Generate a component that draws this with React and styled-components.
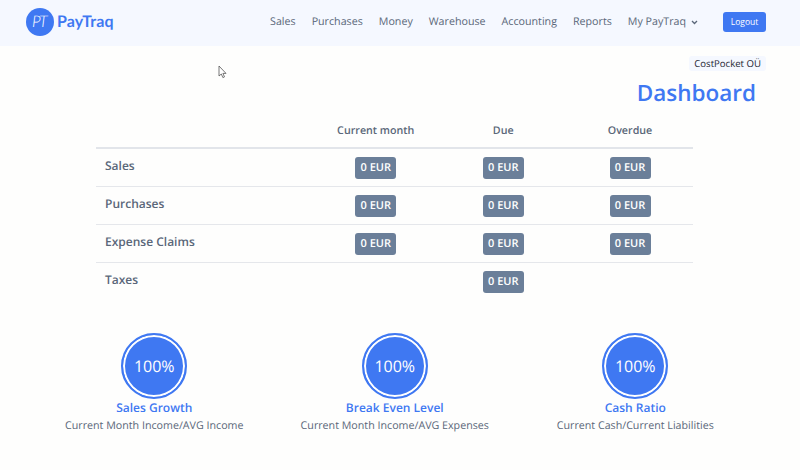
import React from "react";
import styled, { createGlobalStyle } from "styled-components";

const Global = createGlobalStyle`
  html, body { margin: 0; padding: 0; background: #fff; }
  body { font-family: "Open Sans", "Liberation Sans", sans-serif; color: #4a5568; text-rendering: geometricPrecision; }
`;
const Page = styled.div`
  position: relative;
  width: 800px;
  height: 470px;
  overflow: hidden;
  background: #fefefd;
`;
const Header = styled.header`
  height: 46px;
  box-sizing: border-box;
  background: #f5f8ff;
  display: flex;
  align-items: center;
  padding: 0 34px 2px 26px;
`;
const Brand = styled.div`
  display: flex;
  align-items: center;
  gap: 3px;
`;
const LogoMark = styled.div`
  width: 28px;
  height: 28px;
  border-radius: 50%;
  background: #3f78f2;
  color: #fff;
  display: flex;
  align-items: center;
  justify-content: center;
  font: italic 300 16px/1 "Lato", sans-serif;
  letter-spacing: -1.5px;
  padding-right: 2px;
  box-sizing: border-box;
`;
const BrandName = styled.span`
  font: 700 16px/1 "Lato", sans-serif;
  color: #3f78f2;
  letter-spacing: 0.15px;
`;
const Nav = styled.nav`
  margin-left: auto;
  display: flex;
  align-items: center;
  gap: 16px;
`;
const NavItem = styled.a`
  font-size: 10.7px;
  color: #5a6779;
  display: flex;
  align-items: center;
  gap: 5px;
`;
const Logout = styled.button`
  margin-left: 9px;
  width: 43px;
  height: 20px;
  padding: 0;
  border: 0;
  border-radius: 3px;
  background: #3f78f2;
  color: #fff;
  font: 400 8.5px/20px "Open Sans", sans-serif;
`;
const Main = styled.main`
  display: flex;
  flex-direction: column;
`;
const CompanyRow = styled.div`
  display: flex;
  justify-content: flex-end;
  padding: 10px 34px 0 0;
`;
const Company = styled.span`
  background: #f5f8ff;
  border-radius: 3px;
  padding: 0 5px;
  height: 15px;
  font-size: 9.6px;
  font-weight: 500;
  line-height: 15px;
  color: #1f2733;
`;
const Title = styled.h1`
  margin: 5px 44px 0 0;
  text-align: right;
  font-size: 22.5px;
  line-height: 34px;
  font-weight: 600;
  color: #3f78f2;
`;
const Table = styled.div`
  margin: 8px 0 0 96px;
  width: 597px;
`;
const Row = styled.div`
  display: grid;
  grid-template-columns: 216px 127.5px 127.5px 126px;
  height: ${(p) => (p.$head ? "31px" : "38px")};
  box-sizing: border-box;
  border-bottom: ${(p) => (p.$head ? "2px solid #e2e5ea" : p.$last ? "0" : "1px solid #e5e7eb")};
`;
const HeadCell = styled.div`
  text-align: center;
  font-size: 10.7px;
  font-weight: 600;
  line-height: 18px;
  padding-top: 4px;
  color: #5a6779;
`;
const RowLabel = styled.div`
  padding: 7px 0 0 9px;
  font-size: 12px;
  line-height: 20px;
  font-weight: 600;
  color: #5a6779;
`;
const Cell = styled.div`
  display: flex;
  justify-content: center;
  padding-top: 8px;
`;
const Badge = styled.span`
  width: 41px;
  height: 22px;
  border-radius: 3px;
  background: #6b7f99;
  color: #fff;
  font-size: 11px;
  font-weight: 600;
  line-height: 22px;
  text-align: center;
`;
const Gauges = styled.div`
  display: grid;
  grid-template-columns: repeat(3, 240.5px);
  margin: 32px 0 0 34px;
`;
const Gauge = styled.div`
  display: flex;
  flex-direction: column;
  align-items: center;
`;
const Circle = styled.div`
  width: 66px;
  height: 66px;
  box-sizing: border-box;
  border-radius: 50%;
  background: #3f78f2;
  border: 2px solid #3f78f2;
  box-shadow: inset 0 0 0 2px #fff;
  color: #fff;
  font-size: 16px;
  display: flex;
  align-items: center;
  justify-content: center;
`;
const GaugeTitle = styled.div`
  font-size: 12px;
  line-height: 18px;
  font-weight: 600;
  color: #3f78f2;
`;
const GaugeSub = styled.div`
  margin-top: 2px;
  font-size: 10.7px;
  line-height: 15px;
  color: #5a6779;
`;
const Cursor = styled.svg`
  position: absolute;
  left: 218px;
  top: 65px;
`;

const rows = [
  ["Sales", true, true, true],
  ["Purchases", true, true, true],
  ["Expense Claims", true, true, true],
  ["Taxes", false, true, false],
];
const gauges = [
  ["Sales Growth", "Current Month Income/AVG Income"],
  ["Break Even Level", "Current Month Income/AVG Expenses"],
  ["Cash Ratio", "Current Cash/Current Liabilities"],
];
const links = ["Sales", "Purchases", "Money", "Warehouse", "Accounting", "Reports"];

export default function App() {
  return (
    <Page>
      <Global />
      <Header>
        <Brand>
          <LogoMark>PT</LogoMark>
          <BrandName>PayTraq</BrandName>
        </Brand>
        <Nav>
          {links.map((l) => (
            <NavItem key={l}>{l}</NavItem>
          ))}
          <NavItem>
            My PayTraq
            <svg width="7" height="5" viewBox="0 0 7 5">
              <path d="M1 1l2.5 2.5L6 1" fill="none" stroke="#5a6779" strokeWidth="1.3" />
            </svg>
          </NavItem>
          <Logout>Logout</Logout>
        </Nav>
      </Header>
      <Main>
        <CompanyRow>
          <Company>CostPocket OÜ</Company>
        </CompanyRow>
        <Title>Dashboard</Title>
        <Table>
          <Row $head>
            <div />
            <HeadCell>Current month</HeadCell>
            <HeadCell>Due</HeadCell>
            <HeadCell>Overdue</HeadCell>
          </Row>
          {rows.map(([name, a, b, c], i) => (
            <Row key={name} $last={i === rows.length - 1}>
              <RowLabel>{name}</RowLabel>
              {[a, b, c].map((show, j) => (
                <Cell key={j}>{show && <Badge>0 EUR</Badge>}</Cell>
              ))}
            </Row>
          ))}
        </Table>
        <Gauges>
          {gauges.map(([t, s]) => (
            <Gauge key={t}>
              <Circle>100%</Circle>
              <GaugeTitle>{t}</GaugeTitle>
              <GaugeSub>{s}</GaugeSub>
            </Gauge>
          ))}
        </Gauges>
      </Main>
      <Cursor width="9" height="14" viewBox="0 0 9 14">
        <path d="M1 1v10l2.3-2 1.6 3.6 1.6-.7L4.9 8.4H8z" fill="#fff" stroke="#555" strokeWidth="0.8" />
      </Cursor>
    </Page>
  );
}
